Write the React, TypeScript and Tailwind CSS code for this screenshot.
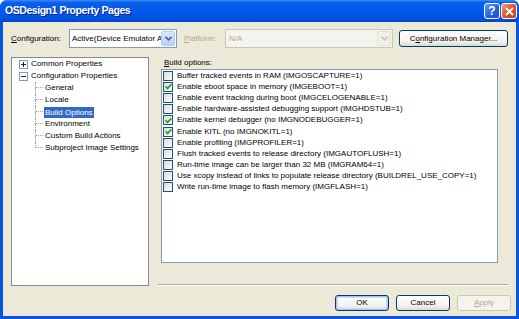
import React from "react"

interface BuildOption {
    label: string
    checked: boolean
}

const buildOptions: BuildOption[] = [
    { label: "Buffer tracked events in RAM (IMGOSCAPTURE=1)", checked: false },
    { label: "Enable eboot space in memory (IMGEBOOT=1)", checked: true },
    { label: "Enable event tracking during boot (IMGCELOGENABLE=1)", checked: false },
    { label: "Enable hardware-assisted debugging support (IMGHDSTUB=1)", checked: false },
    { label: "Enable kernel debugger (no IMGNODEBUGGER=1)", checked: true },
    { label: "Enable KITL (no IMGNOKITL=1)", checked: true },
    { label: "Enable profiling (IMGPROFILER=1)", checked: false },
    { label: "Flush tracked events to release directory (IMGAUTOFLUSH=1)", checked: false },
    { label: "Run-time image can be larger than 32 MB (IMGRAM64=1)", checked: false },
    { label: "Use xcopy instead of links to populate release directory (BUILDREL_USE_COPY=1)", checked: false },
    { label: "Write run-time image to flash memory (IMGFLASH=1)", checked: false },
]

const childPages = ["General", "Locale", "Build Options", "Environment", "Custom Build Actions", "Subproject Image Settings"]

function Chevron({ color }: { color: string }) {
    return (
        <svg width="7" height="5" viewBox="0 0 7 5">
            <path d="M0.5 0.8 L3.5 3.8 L6.5 0.8" stroke={color} strokeWidth="1.6" fill="none" />
        </svg>
    )
}

function ExpandBox({ open }: { open: boolean }) {
    return (
        <svg width="9" height="9" viewBox="0 0 9 9" className="shrink-0">
            <rect x="0.5" y="0.5" width="8" height="8" fill="#fff" stroke="#7F9DB9" />
            <line x1="2" y1="4.5" x2="7" y2="4.5" stroke="#222" />
            {!open && <line x1="4.5" y1="2" x2="4.5" y2="7" stroke="#222" />}
        </svg>
    )
}

function CheckBox({ checked }: { checked: boolean }) {
    return (
        <span className="w-[10px] h-[10px] shrink-0 border border-[#1C5180] bg-[linear-gradient(135deg,#DCDCD7,#FBFBF9)] flex items-center justify-center">
            {checked && (
                <svg width="7" height="7" viewBox="0 0 7 7">
                    <path d="M0.6 3.4 L2.6 5.4 L6.4 1.2" stroke="#21A121" strokeWidth="1.7" fill="none" />
                </svg>
            )}
        </span>
    )
}

function XpButton({ children, def, disabled, className }: { children: React.ReactNode; def?: boolean; disabled?: boolean; className?: string }) {
    if (disabled) {
        return (
            <div className={`flex items-center justify-center rounded-[3px] border border-[#C9C7BA] bg-[#F5F4EA] text-[#ACA899] ${className}`}>
                {children}
            </div>
        )
    }
    return (
        <div className={`flex items-center justify-center rounded-[3px] border border-[#003C74] bg-[linear-gradient(#FFFFFF,#F3F2EE_70%,#DCD8CC)] ${def ? "shadow-[inset_0_0_0_1px_#A9C4F0,inset_0_0_0_2px_#CEDCF6]" : ""} ${className}`}>
            {children}
        </div>
    )
}

export default function App() {
    return (
        <div className="w-[519px] h-[319px] flex flex-col bg-[#0854E0] rounded-t-[7px] overflow-hidden font-['Liberation_Sans',Arial,sans-serif] text-[8px] text-black select-none">
            {/* title bar */}
            <div className="h-[22px] shrink-0 flex items-center pl-[5px] pr-[2px] bg-[linear-gradient(#3C8CF7,#0A5FEA_12%,#0058EE_55%,#0052E0_85%,#0044C8)]">
                <span className="text-white text-[10.5px] font-bold tracking-[-0.45px] [text-shadow:1px_1px_0_#0A1E8C]">
                    OSDesign1 Property Pages
                </span>
                <div className="ml-auto flex gap-[1px]">
                    <div className="w-[16px] h-[16px] rounded-[3px] border border-white bg-[linear-gradient(135deg,#5E9BFA,#2460DC_60%,#1A50C8)] flex items-center justify-center text-white text-[12px] font-bold leading-none">
                        ?
                    </div>
                    <div className="w-[16px] h-[16px] rounded-[3px] border border-white bg-[linear-gradient(135deg,#EE9A7A,#D9552B_55%,#C2401A)] flex items-center justify-center">
                        <svg width="9" height="9" viewBox="0 0 9 9">
                            <path d="M1 1 L8 8 M8 1 L1 8" stroke="#fff" strokeWidth="1.8" />
                        </svg>
                    </div>
                </div>
            </div>

            {/* body */}
            <div className="flex-1 mx-[3px] mb-[3px] bg-[#ECE9D8] flex flex-col pt-[7px] pl-[8px] pr-[8px]">
                {/* configuration row */}
                <div className="h-[19px] flex items-center">
                    <span className="w-[58px]">
                        <span className="underline">C</span>onfiguration:
                    </span>
                    <div className="w-[108px] h-[19px] border border-[#7F9DB9] bg-white flex items-center pl-[2px] pr-[1px]">
                        <span className="flex-1 overflow-hidden whitespace-nowrap">Active(Device Emulator A</span>
                        <div className="w-[14px] h-[15px] rounded-[2px] border border-[#B6CCF8] bg-[linear-gradient(#DCE7FD,#B7CDF8)] flex items-center justify-center">
                            <Chevron color="#4D6185" />
                        </div>
                    </div>
                    <span className="ml-[7px] w-[41px] text-[#ACA899]">
                        <span className="underline">P</span>latform:
                    </span>
                    <div className="w-[168px] h-[19px] border border-[#C9C7BA] bg-[#F4F3EE] flex items-center pl-[3px] pr-[1px] text-[#ACA899]">
                        <span className="flex-1">N/A</span>
                        <div className="w-[14px] h-[15px] rounded-[2px] border border-[#E3E1D6] bg-[#F0EFE8] flex items-center justify-center">
                            <Chevron color="#C9C7BA" />
                        </div>
                    </div>
                    <XpButton className="ml-[6px] w-[109px] h-[17px]">
                        <span>
                            C<span className="underline">o</span>nfiguration Manager...
                        </span>
                    </XpButton>
                </div>

                {/* main area */}
                <div className="mt-[9px] h-[229px] flex">
                    {/* tree */}
                    <div className="w-[138px] h-full border border-[#828C98] bg-white flex flex-col">
                        <div className="h-[12px] flex items-center pl-[7px]">
                            <ExpandBox open={false} />
                            <span className="ml-[3px] whitespace-nowrap">Common Properties</span>
                        </div>
                        <div className="h-[12px] flex items-center pl-[7px]">
                            <ExpandBox open={true} />
                            <span className="ml-[3px] whitespace-nowrap">Configuration Properties</span>
                        </div>
                        {childPages.map((page, i) => (
                            <div key={page} className="h-[12px] flex items-center pl-[23px]">
                                <div className="w-[8px] h-[12px] flex flex-col">
                                    <div className="h-[6px] border-l border-b border-dotted border-[#A0A0A0]" />
                                    <div className={`h-[6px] ${i < childPages.length - 1 ? "border-l border-dotted border-[#A0A0A0]" : ""}`} />
                                </div>
                                {page === "Build Options" ? (
                                    <span className="ml-[1px] px-[1px] h-[11px] leading-[11px] bg-[#316AC5] text-white whitespace-nowrap">{page}</span>
                                ) : (
                                    <span className="ml-[2px] whitespace-nowrap">{page}</span>
                                )}
                            </div>
                        ))}
                    </div>

                    {/* property page */}
                    <div className="flex-1 ml-[9px] flex flex-col">
                        <div className="h-[12px] leading-[12px] pl-[6px]">
                            <span className="underline">B</span>uild options:
                        </div>
                        <div className="ml-[3px] mr-[10px] h-[194px] border border-[#7F9DB9] bg-white flex flex-col">
                            {buildOptions.map((opt) => (
                                <div key={opt.label} className="h-[11.2px] flex items-center pl-[1px]">
                                    <CheckBox checked={opt.checked} />
                                    <span className="ml-[4px] whitespace-nowrap">{opt.label}</span>
                                </div>
                            ))}
                        </div>
                        <div className="mt-auto h-[2px] border-t border-[#ACA899] border-b border-b-white" />
                    </div>
                </div>

                {/* dialog buttons */}
                <div className="mt-[9px] flex justify-end gap-[7px] mr-[-3px]">
                    <XpButton def className="w-[54px] h-[16px]">OK</XpButton>
                    <XpButton className="w-[54px] h-[16px]">Cancel</XpButton>
                    <XpButton disabled className="w-[54px] h-[16px]">
                        <span>
                            <span className="underline">A</span>pply
                        </span>
                    </XpButton>
                </div>
            </div>
        </div>
    )
}
